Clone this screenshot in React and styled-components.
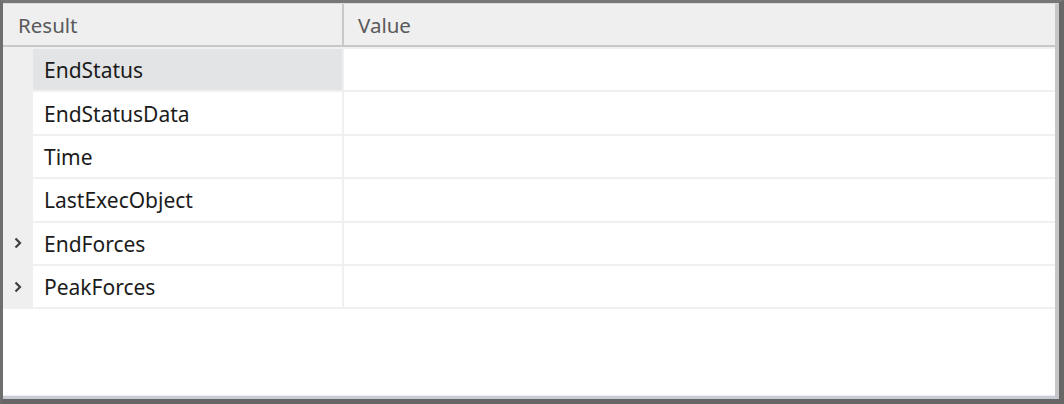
import React from "react";
import styled, { createGlobalStyle } from "styled-components";

const Global = createGlobalStyle`
  html, body {
    margin: 0;
    padding: 0;
    background: #ffffff;
  }
  * {
    box-sizing: border-box;
  }
`

const Frame = styled.div`
  width: 1064px;
  height: 404px;
  border-top: 3px solid #777777;
  border-left: 3px solid #6e6e6e;
  border-right: 5px solid #676767;
  border-bottom: 5px solid #666666;
  display: flex;
`

const Inner = styled.div`
  flex: 1;
  display: flex;
  flex-direction: column;
  border-top: 1px solid #d8dbe1;
  border-right: 4px solid #c6c6c8;
  border-bottom: 3px solid #c8ccd4;
  box-shadow: inset 0 -1px 0 #eceef1;
  background: #ffffff;
  font-family: "Noto Sans", "Open Sans", sans-serif;
`

const Header = styled.div`
  height: 43px;
  display: flex;
  background: #efefef;
  border-bottom: 2px solid #c8c8c8;
`

const HeadCell = styled.div`
  width: ${p => (p.$width ? p.$width + "px" : "auto")};
  flex: ${p => (p.$width ? "none" : 1)};
  display: flex;
  align-items: center;
  padding-left: ${p => p.$pad}px;
  font-size: 20.5px;
  color: #5a5a5a;
  border-right: ${p => (p.$divider ? "2px solid #c8c8c8" : "none")};
`

const Body = styled.div`
  flex: 1;
  display: flex;
  flex-direction: column;
  border-top: 2px solid #f0f0f0;
`

const Row = styled.div`
  height: 43.4px;
  display: flex;
  border-bottom: 2px solid #f0f0f0;
`

const Gutter = styled.div`
  width: 30px;
  flex: none;
  display: flex;
  align-items: center;
  justify-content: center;
  background: #efefef;
`

const NameCell = styled.div`
  width: 311px;
  flex: none;
  display: flex;
  align-items: center;
  padding-left: 11px;
  padding-top: 1px;
  font-size: 21px;
  color: #1b1b1b;
  background: ${p => (p.$selected ? "#e3e4e6" : "#ffffff")};
  border-right: 2px solid #f0f0f0;
`

const ValueCell = styled.div`
  flex: 1;
  background: #ffffff;
`

const Chevron = () => (
  <svg width="12" height="14" viewBox="0 0 12 14">
    <path d="M3.5 2.5 L8 7 L3.5 11.5" fill="none" stroke="#404040" strokeWidth="2.2" />
  </svg>
)

const rows = [
  { name: "EndStatus", selected: true },
  { name: "EndStatusData" },
  { name: "Time" },
  { name: "LastExecObject" },
  { name: "EndForces", expandable: true },
  { name: "PeakForces", expandable: true },
]

const App = () => {
  return (
    <>
      <Global />
      <Frame>
        <Inner>
          <Header>
            <HeadCell $width={341} $pad={15} $divider>Result</HeadCell>
            <HeadCell $pad={14}>Value</HeadCell>
          </Header>
          <Body>
            {rows.map(r => (
              <Row key={r.name}>
                <Gutter>{r.expandable && <Chevron />}</Gutter>
                <NameCell $selected={r.selected}>{r.name}</NameCell>
                <ValueCell />
              </Row>
            ))}
          </Body>
        </Inner>
      </Frame>
    </>
  )
}

export default App
